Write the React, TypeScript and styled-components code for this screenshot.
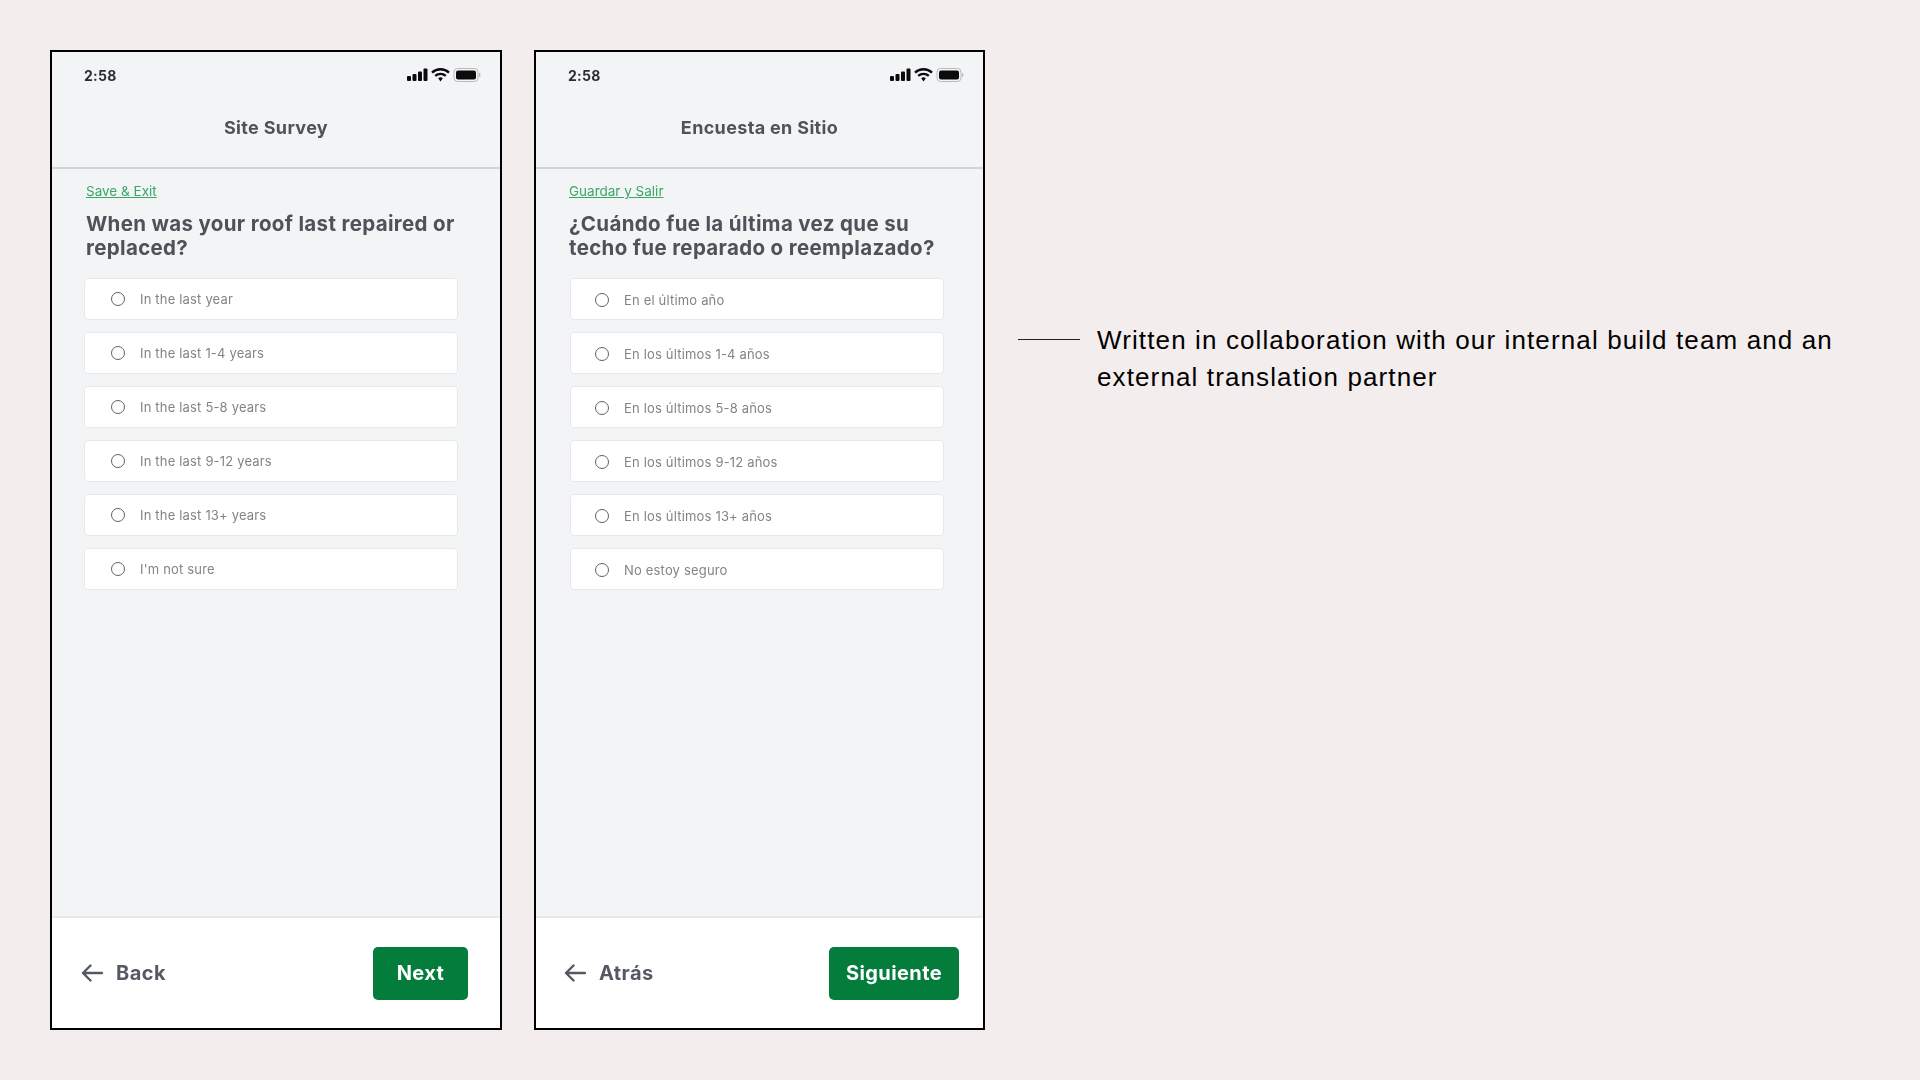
import React from "react";
import styled, { createGlobalStyle } from "styled-components";

const Global = createGlobalStyle`
  html, body { margin: 0; padding: 0; background: #f3eded; }
  body { width: 1920px; height: 1080px; overflow: hidden; font-family: Inter, "Liberation Sans", sans-serif; }
`;

const Page = styled.main`
  display: flex;
  align-items: flex-start;
  padding: 50px 0 0 50px;
  height: 1080px;
  box-sizing: border-box;
`;

const Phone = styled.section<{ $width: number; $gap: number }>`
  width: ${(p) => p.$width}px;
  height: 980px;
  box-sizing: border-box;
  border: 2px solid #000;
  background: #f3f4f6;
  margin-right: ${(p) => p.$gap}px;
  flex: none;
`;

const Display = styled.div`
  display: flex;
  flex-direction: column;
  height: 100%;
  filter: blur(0.35px);
`;

const StatusBar = styled.div`
  display: flex;
  align-items: center;
  justify-content: space-between;
  height: 46px;
  padding: 0 19px 0 32px;
`;

const Time = styled.span`
  font-size: 14px;
  font-weight: 700;
  letter-spacing: 0.3px;
  color: #2b2d31;
`;

const Header = styled.header`
  display: flex;
  align-items: center;
  justify-content: center;
  height: 71px;
  padding-bottom: 10px;
  box-sizing: border-box;
  border-bottom: 2px solid #d1d3d6;
`;

const Title = styled.h1`
  margin: 0;
  font-size: 18px;
  font-weight: 700;
  letter-spacing: 0.34px;
  color: #4e5259;
`;

const Body = styled.div<{ $inset: number }>`
  flex: 1;
  display: flex;
  flex-direction: column;
  padding: 13px 0 0 ${(p) => p.$inset}px;
`;

const SaveLink = styled.a`
  align-self: flex-start;
  font-size: 13.5px;
  line-height: 18px;
  color: #3aa767;
  text-decoration: underline;
  margin-left: 1px;
`;

const Question = styled.h2`
  margin: 12px 0 18px 1px;
  width: 390px;
  font-size: 20.5px;
  line-height: 24px;
  font-weight: 700;
  letter-spacing: 0.34px;
  color: #4e5259;
`;

const Options = styled.div<{ $shift: number }>`
  display: flex;
  flex-direction: column;
  gap: 12px;
  width: 374px;
  margin-left: ${(p) => p.$shift}px;
`;

const Option = styled.label<{ $pad: number; $drop: number }>`
  display: flex;
  align-items: center;
  gap: 15px;
  height: 42px;
  box-sizing: border-box;
  padding: ${(p) => p.$drop}px 0 0 ${(p) => p.$pad}px;
  background: #fff;
  border: 1px solid #e7e8ea;
  border-radius: 4px;
`;

const Radio = styled.span`
  width: 14px;
  height: 14px;
  box-sizing: border-box;
  border: 1.7px solid #5f6167;
  border-radius: 50%;
  flex: none;
`;

const OptionText = styled.span`
  font-size: 13px;
  letter-spacing: 0.18px;
  color: #828489;
`;

const Footer = styled.footer<{ $left: number; $right: number }>`
  display: flex;
  align-items: center;
  justify-content: space-between;
  height: 112px;
  box-sizing: border-box;
  padding: 0 ${(p) => p.$right}px 0 ${(p) => p.$left}px;
  background: #fff;
  border-top: 2px solid #e7e8ea;
`;

const BackButton = styled.button`
  display: flex;
  align-items: center;
  gap: 13px;
  padding: 0;
  border: 0;
  background: none;
  font: 700 20px Inter, "Liberation Sans", sans-serif;
  letter-spacing: 0.45px;
  color: #555963;
`;

const NextButton = styled.button<{ $width: number }>`
  width: ${(p) => p.$width}px;
  height: 53px;
  padding: 0;
  border: 0;
  border-radius: 5px;
  background: #047c3c;
  color: #fff;
  font: 700 20px Inter, "Liberation Sans", sans-serif;
  letter-spacing: 0.4px;
`;

const Note = styled.aside`
  display: flex;
  align-items: flex-start;
  gap: 17px;
  margin: 272px 0 0 33px;
`;

const Rule = styled.span`
  width: 62px;
  height: 1px;
  margin-top: 17px;
  background: #222;
  flex: none;
`;

const NoteText = styled.p`
  margin: 0;
  width: 800px;
  font-family: "Liberation Sans", Arial, sans-serif;
  font-size: 26px;
  line-height: 37px;
  letter-spacing: 1.12px;
  color: #000;
`;

const StatusIcons = () => (
  <svg width="74" height="16" viewBox="0 0 74 16" fill="#0b0b0c">
    <rect x="0" y="9" width="4" height="5" rx="1" />
    <rect x="5.5" y="7" width="4" height="7" rx="1" />
    <rect x="11" y="4.5" width="4" height="9.5" rx="1" />
    <rect x="16.5" y="1.5" width="4" height="12.5" rx="1" />
    <path d="M25 5.6a12.4 12.4 0 0 1 17 0" fill="none" stroke="#0b0b0c" strokeWidth="2.3" />
    <path d="M28.2 8.9a7.8 7.8 0 0 1 10.6 0" fill="none" stroke="#0b0b0c" strokeWidth="2.3" />
    <path d="M31.2 11.2a3.4 3.4 0 0 1 4.6 0L33.5 14.4z" />
    <rect x="47" y="1.5" width="24" height="13" rx="3.5" fill="none" stroke="#b9babc" strokeWidth="1" />
    <rect x="49" y="3.5" width="20" height="9" rx="2" />
    <rect x="72" y="6" width="1.3" height="4" rx="0.6" fill="#b9babc" />
  </svg>
);

const ArrowLeft = () => (
  <svg width="22" height="18" viewBox="0 0 22 18" fill="none" stroke="#555963" strokeWidth="2.4" strokeLinecap="round" strokeLinejoin="round">
    <path d="M21 9H2M9.5 1.5 2 9l7.5 7.5" />
  </svg>
);

type Copy = {
  title: string; save: string; question: string[]; options: string[]; back: string; next: string;
  inset: number; shift: number; pad: number; left: number; right: number; nextWidth: number;
  phoneWidth: number; gap: number; drop: number;
};

const screens: Copy[] = [
  {
    title: "Site Survey", save: "Save & Exit",
    question: ["When was your roof last repaired or", "replaced?"],
    options: ["In the last year", "In the last 1-4 years", "In the last 5-8 years", "In the last 9-12 years", "In the last 13+ years", "I'm not sure"],
    back: "Back", next: "Next", inset: 33, shift: -1, pad: 26, left: 29, right: 32, nextWidth: 95,
    phoneWidth: 452, gap: 32, drop: 0,
  },
  {
    title: "Encuesta en Sitio", save: "Guardar y Salir",
    question: ["¿Cuándo fue la última vez que su", "techo fue reparado o reemplazado?"],
    options: ["En el último año", "En los últimos 1-4 años", "En los últimos 5-8 años", "En los últimos 9-12 años", "En los últimos 13+ años", "No estoy seguro"],
    back: "Atrás", next: "Siguiente", inset: 32, shift: 2, pad: 24, left: 28, right: 24, nextWidth: 130,
    phoneWidth: 451, gap: 0, drop: 1,
  },
];

const Screen = ({ s }: { s: Copy }) => (
  <Phone $width={s.phoneWidth} $gap={s.gap}>
    <Display>
      <StatusBar>
        <Time>2:58</Time>
        <StatusIcons />
      </StatusBar>
      <Header><Title>{s.title}</Title></Header>
      <Body $inset={s.inset}>
        <SaveLink>{s.save}</SaveLink>
        <Question>{s.question[0]}<br />{s.question[1]}</Question>
        <Options $shift={s.shift}>
          {s.options.map((o) => (
            <Option key={o} $pad={s.pad} $drop={s.drop}>
              <Radio />
              <OptionText>{o}</OptionText>
            </Option>
          ))}
        </Options>
      </Body>
      <Footer $left={s.left} $right={s.right}>
        <BackButton><ArrowLeft />{s.back}</BackButton>
        <NextButton $width={s.nextWidth}>{s.next}</NextButton>
      </Footer>
    </Display>
  </Phone>
);

export default function App() {
  return (
    <>
      <Global />
      <Page>
        {screens.map((s) => <Screen key={s.title} s={s} />)}
        <Note>
          <Rule />
          <NoteText>Written in collaboration with our internal build team and an external translation partner</NoteText>
        </Note>
      </Page>
    </>
  );
}
